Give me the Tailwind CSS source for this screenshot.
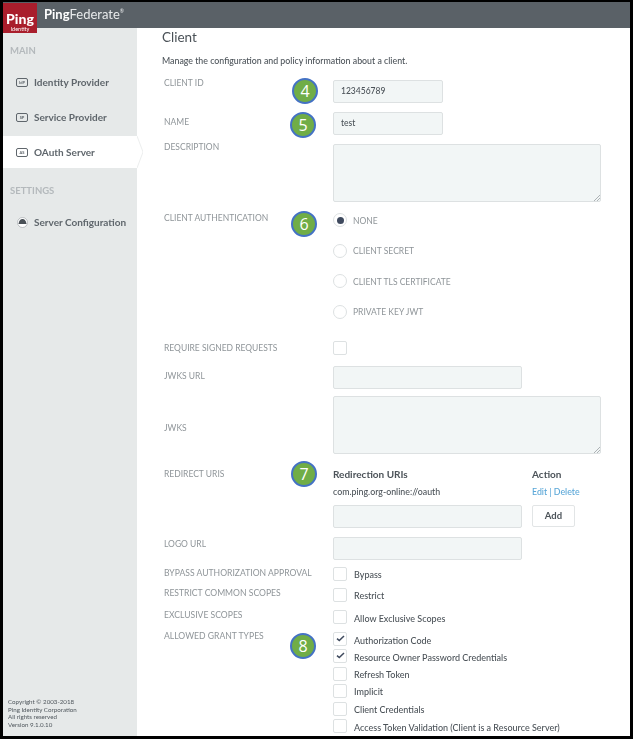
<!DOCTYPE html>
<html lang="en">
<head>
    <meta charset="UTF-8">
    <title>PingFederate Client</title>
    <script src="https://cdn.jsdelivr.net/npm/@tailwindcss/browser@4"></script>
</head>
<body class="bg-black font-['Lato',sans-serif]">
<div class="relative w-[633px] h-[739px] pt-[2px] pl-[3px] pb-[3px] pr-[3px] overflow-hidden">
    <div class="w-full h-full flex flex-col bg-white blur-[0.35px]">
        <!-- top bar -->
        <header class="relative h-[26px] shrink-0 bg-[#5a6167] flex items-center pl-[41px]">
            <div class="absolute left-0 top-[1px] w-[34px] h-[30px] bg-[#a91e2c] text-white flex flex-col items-center pt-[9px] z-10">
                <span class="text-[14px] leading-[14px] font-black">Ping</span>
                <span class="text-[5.5px] leading-[6px]">Identity</span>
            </div>
            <span class="text-white text-[13px] font-bold">Ping</span><span class="text-[#e8eaeb] text-[13px]">Federate</span><span class="text-[#e8eaeb] text-[5px] mb-[6px]">®</span>
        </header>

        <div class="flex flex-1 min-h-0">
            <!-- sidebar -->
            <aside class="relative w-[134px] shrink-0 bg-[#e6e9e9] flex flex-col text-[10px] font-bold text-[#5f666c]">
                <div class="text-[9.5px] font-bold text-[#b4b9bc] pl-[7px] mt-[17px] leading-[12px]">MAIN</div>
                <div class="flex items-center gap-[6px] pl-[13px] h-[35px] mt-[8px]">
                    <span class="w-[12px] h-[9px] border border-[#5f666c] rounded-[2px] text-[4px] leading-[7px] text-center">IdP</span>
                    <span>Identity Provider</span>
                </div>
                <div class="flex items-center gap-[6px] pl-[13px] h-[35px]">
                    <span class="w-[12px] h-[9px] border border-[#5f666c] rounded-[2px] text-[4px] leading-[7px] text-center">SP</span>
                    <span>Service Provider</span>
                </div>
                <div class="relative flex items-center gap-[6px] pl-[13px] h-[32px] mt-[1px] bg-white">
                    <span class="w-[12px] h-[9px] border border-[#5f666c] rounded-[2px] text-[4px] leading-[7px] text-center">AS</span>
                    <span>OAuth Server</span>
                    <svg class="absolute left-full top-0 w-[6px] h-[32px]" viewBox="0 0 6 32"><path d="M0 0 L6 16 L0 32" fill="#fff" stroke="#dfe3e3" stroke-width="0.6"/></svg>
                </div>
                <div class="text-[9.5px] font-bold text-[#b4b9bc] pl-[7px] mt-[17px] leading-[12px]">SETTINGS</div>
                <div class="flex items-center gap-[6px] pl-[14px] h-[35px] mt-[8px]">
                    <svg class="w-[11px] h-[11px]" viewBox="0 0 11 11"><circle cx="5.5" cy="5.5" r="5" fill="#fff" stroke="#9aa0a4" stroke-width="0.6"/><path d="M1.5 7 C2 3 4 2 5.5 2 C7 2 9 3 9.5 7 Z" fill="#4a5157"/></svg>
                    <span>Server Configuration</span>
                </div>
                <div class="mt-auto pl-[5px] pb-[8px] text-[6.2px] leading-[7.5px] font-normal text-[#4f565c]">
                    <div>Copyright © 2003-2018</div>
                    <div>Ping Identity Corporation</div>
                    <div>All rights reserved</div>
                    <div>Version 9.1.0.10</div>
                </div>
            </aside>

            <!-- form -->
            <main class="flex-1 pl-[25px] text-[9px] font-medium text-[#4c5359]">
                <h1 class="text-[13.5px] leading-[16px] font-normal text-[#4a5157] mt-[1px]">Client</h1>
                <p class="text-[8.8px] leading-[12px] font-medium mt-[10px]">Manage the configuration and policy information about a client.</p>

                <div class="flex flex-col pl-[2px] mt-[13px]">
                    <!-- client id -->
                    <div class="flex h-[23px]">
                        <div class="w-[169px] -mt-[2px] text-[8.5px] leading-[10px] font-normal text-[#8f9599]">CLIENT ID</div>
                        <div class="w-[110px] border border-[#dde1e2] rounded-[2px] bg-[#f2f6f6] pl-[7px] leading-[21px] text-[8.5px]">123456789</div>
                    </div>
                    <div class="flex h-[23px] mt-[9px]">
                        <div class="w-[169px] text-[8.5px] leading-[10px] font-normal text-[#8f9599] pt-[5px]">NAME</div>
                        <div class="w-[110px] border border-[#dde1e2] rounded-[2px] bg-[#f2f6f6] pl-[7px] leading-[21px] text-[8.5px]">test</div>
                    </div>
                    <div class="flex h-[58px] mt-[9px]">
                        <div class="w-[169px] -mt-[2px] text-[8.5px] leading-[10px] font-normal text-[#8f9599]">DESCRIPTION</div>
                        <div class="relative w-[268px] border border-[#dde1e2] rounded-[2px] bg-[#f2f6f6]">
                            <svg class="absolute right-0 bottom-0 w-[7px] h-[7px]" viewBox="0 0 7 7"><path d="M1 7 L7 1 M4 7 L7 4" stroke="#8f9599" stroke-width="0.7"/></svg>
                        </div>
                    </div>

                    <!-- client auth -->
                    <div class="flex mt-[11px]">
                        <div class="w-[169px] text-[8.5px] leading-[10px] font-normal text-[#8f9599]">CLIENT AUTHENTICATION</div>
                        <div class="flex flex-col gap-[16.7px] text-[8.5px] font-normal text-[#8f9599]">
                            <div class="flex items-center gap-[6px] h-[14px] leading-[16px]">
                                <span class="w-[14px] h-[14px] rounded-full border border-[#dde1e2] bg-white flex items-center justify-center"><span class="w-[7px] h-[7px] rounded-full bg-[#3f4a5e]"></span></span><span class="pt-[1px]">NONE</span>
                            </div>
                            <div class="flex items-center gap-[6px] h-[14px]"><span class="w-[14px] h-[14px] rounded-full border border-[#dde1e2] bg-white"></span><span class="pt-[1px]">CLIENT SECRET</span></div>
                            <div class="flex items-center gap-[6px] h-[14px]"><span class="w-[14px] h-[14px] rounded-full border border-[#dde1e2] bg-white"></span><span class="pt-[1px]">CLIENT TLS CERTIFICATE</span></div>
                            <div class="flex items-center gap-[6px] h-[14px]"><span class="w-[14px] h-[14px] rounded-full border border-[#dde1e2] bg-white"></span><span class="pt-[1px]">PRIVATE KEY JWT</span></div>
                        </div>
                    </div>

                    <div class="flex mt-[22px] h-[14px]">
                        <div class="w-[169px] text-[8.5px] leading-[15px] font-normal text-[#8f9599]">REQUIRE SIGNED REQUESTS</div>
                        <span class="w-[14px] h-[14px] border border-[#dde1e2] rounded-[2px]"></span>
                    </div>
                    <div class="flex h-[23px] mt-[11px]">
                        <div class="w-[169px] text-[8.5px] leading-[20px] font-normal text-[#8f9599]">JWKS URL</div>
                        <div class="w-[189px] border border-[#dde1e2] rounded-[2px] bg-[#f2f6f6]"></div>
                    </div>
                    <div class="flex h-[58px] mt-[7px]">
                        <div class="w-[169px] text-[8.5px] leading-[65px] font-normal text-[#8f9599]">JWKS</div>
                        <div class="relative w-[268px] border border-[#dde1e2] rounded-[2px] bg-[#f2f6f6]">
                            <svg class="absolute right-0 bottom-0 w-[7px] h-[7px]" viewBox="0 0 7 7"><path d="M1 7 L7 1 M4 7 L7 4" stroke="#8f9599" stroke-width="0.7"/></svg>
                        </div>
                    </div>

                    <!-- redirect uris -->
                    <div class="flex mt-[15px]">
                        <div class="w-[169px] text-[8.5px] leading-[10px] font-normal text-[#8f9599]">REDIRECT URIS</div>
                        <div>
                            <div class="flex font-bold text-[10px] leading-[10px]">
                                <div class="w-[199px]">Redirection URIs</div>
                                <div>Action</div>
                            </div>
                            <div class="flex text-[8.8px] leading-[10px] mt-[8px]">
                                <div class="w-[199px]">com.ping.org-online://oauth</div>
                                <div class="text-[#5aa7d8]">Edit | Delete</div>
                            </div>
                            <div class="flex mt-[8px]">
                                <div class="w-[189px] h-[23px] border border-[#dde1e2] rounded-[2px] bg-[#f2f6f6] mr-[10px]"></div>
                                <div class="w-[43px] h-[22px] border border-[#e2e5e6] rounded-[2px] bg-white text-center text-[9.5px] leading-[20px] font-bold">Add</div>
                            </div>
                        </div>
                    </div>
                    <div class="flex h-[23px] mt-[9px]">
                        <div class="w-[169px] text-[8.5px] leading-[15px] font-normal text-[#8f9599]">LOGO URL</div>
                        <div class="w-[189px] border border-[#dde1e2] rounded-[2px] bg-[#f2f6f6]"></div>
                    </div>

                    <!-- checkboxes -->
                    <div class="flex h-[14px] mt-[7px]">
                        <div class="w-[169px] text-[8.6px] leading-[12px] font-normal text-[#8f9599]">BYPASS AUTHORIZATION APPROVAL</div>
                        <span class="w-[14px] h-[14px] border border-[#dde1e2] rounded-[2px] mr-[7px]"></span><span class="leading-[16px]">Bypass</span>
                    </div>
                    <div class="flex h-[14px] mt-[7px]">
                        <div class="w-[169px] text-[8.6px] leading-[11px] font-normal text-[#8f9599]">RESTRICT COMMON SCOPES</div>
                        <span class="w-[14px] h-[14px] border border-[#dde1e2] rounded-[2px] mr-[7px]"></span><span class="leading-[16px]">Restrict</span>
                    </div>
                    <div class="flex h-[14px] mt-[8px]">
                        <div class="w-[169px] text-[8.6px] leading-[10px] font-normal text-[#8f9599]">EXCLUSIVE SCOPES</div>
                        <span class="w-[14px] h-[14px] border border-[#dde1e2] rounded-[2px] mr-[7px]"></span><span class="leading-[17px]">Allow Exclusive Scopes</span>
                    </div>
                    <div class="flex mt-[8px]">
                        <div class="w-[169px] -mt-[2px] text-[8.6px] leading-[12px] font-normal text-[#8f9599]">ALLOWED GRANT TYPES</div>
                        <div class="flex flex-col gap-[3.4px]">
                            <div class="flex h-[14px]">
                                <span class="w-[14px] h-[14px] border border-[#dde1e2] rounded-[2px] mr-[7px] flex items-center justify-center"><svg class="w-[9px] h-[8px]" viewBox="0 0 9 8"><path d="M1 3.6 L3.3 5.6 L8 1" fill="none" stroke="#3f4a5e" stroke-width="1.5"/></svg></span><span class="leading-[17px]">Authorization Code</span>
                            </div>
                            <div class="flex h-[14px]">
                                <span class="w-[14px] h-[14px] border border-[#dde1e2] rounded-[2px] mr-[7px] flex items-center justify-center"><svg class="w-[9px] h-[8px]" viewBox="0 0 9 8"><path d="M1 3.6 L3.3 5.6 L8 1" fill="none" stroke="#3f4a5e" stroke-width="1.5"/></svg></span><span class="leading-[17px]">Resource Owner Password Credentials</span>
                            </div>
                            <div class="flex h-[14px]"><span class="w-[14px] h-[14px] border border-[#dde1e2] rounded-[2px] mr-[7px]"></span><span class="leading-[16px]">Refresh Token</span></div>
                            <div class="flex h-[14px]"><span class="w-[14px] h-[14px] border border-[#dde1e2] rounded-[2px] mr-[7px]"></span><span class="leading-[16px]">Implicit</span></div>
                            <div class="flex h-[14px]"><span class="w-[14px] h-[14px] border border-[#dde1e2] rounded-[2px] mr-[7px]"></span><span class="leading-[16px]">Client Credentials</span></div>
                            <div class="flex h-[14px]"><span class="w-[14px] h-[14px] border border-[#dde1e2] rounded-[2px] mr-[7px]"></span><span class="leading-[17px]">Access Token Validation (Client is a Resource Server)</span></div>
                        </div>
                    </div>
                </div>
            </main>
        </div>
    </div>

    <!-- numbered callouts -->
    <div class="absolute left-[292px] top-[78px] w-[26px] h-[26px] rounded-full bg-[#70ad47] border-2 border-[#4472c4] text-white text-[16px] leading-[22px] text-center font-['Open_Sans',sans-serif]">4</div>
    <div class="absolute left-[290px] top-[112px] w-[26px] h-[26px] rounded-full bg-[#70ad47] border-2 border-[#4472c4] text-white text-[16px] leading-[22px] text-center font-['Open_Sans',sans-serif]">5</div>
    <div class="absolute left-[291px] top-[211px] w-[26px] h-[26px] rounded-full bg-[#70ad47] border-2 border-[#4472c4] text-white text-[16px] leading-[22px] text-center font-['Open_Sans',sans-serif]">6</div>
    <div class="absolute left-[291px] top-[461px] w-[26px] h-[26px] rounded-full bg-[#70ad47] border-2 border-[#4472c4] text-white text-[16px] leading-[22px] text-center font-['Open_Sans',sans-serif]">7</div>
    <div class="absolute left-[290px] top-[633px] w-[26px] h-[26px] rounded-full bg-[#70ad47] border-2 border-[#4472c4] text-white text-[16px] leading-[22px] text-center font-['Open_Sans',sans-serif]">8</div>
</div>
</body>
</html>
